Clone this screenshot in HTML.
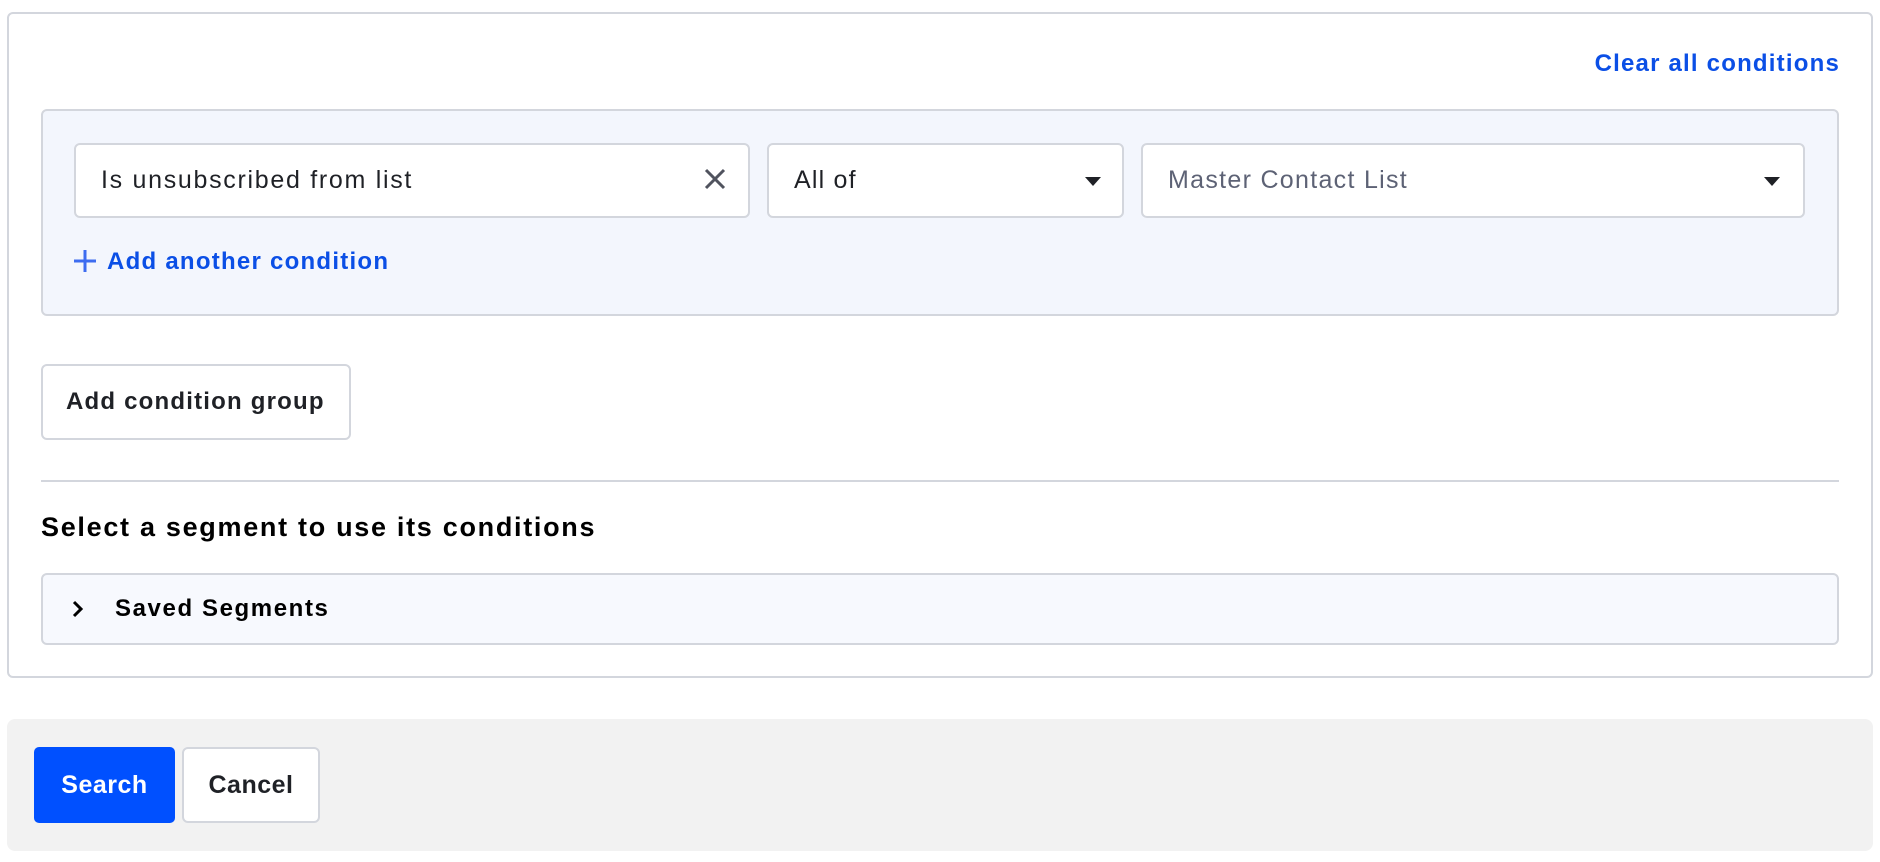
<!DOCTYPE html>
<html><head><style>
*{box-sizing:border-box;margin:0;padding:0}
body{width:1880px;height:862px;background:#fff;font-family:"Liberation Sans",sans-serif;position:relative;overflow:hidden;color:#1f2126}
.a{position:absolute}
.box{border:2px solid #d3d6dd;border-radius:6px}
.t{position:absolute;white-space:nowrap;line-height:1}
</style></head><body>
<div class="a box" style="left:7px;top:12px;width:1866px;height:666px;border-radius:6px"></div>
<div class="t" style="right:40px;top:52px;font-size:24px;font-weight:bold;color:#0b4fe6;letter-spacing:1.2px">Clear all conditions</div>
<div class="a box" style="left:41px;top:109px;width:1798px;height:207px;background:#f3f6fd"></div>
<div class="a box" style="left:74px;top:143px;width:676px;height:75px;background:#fff"></div>
<div class="t" style="left:101px;top:168px;font-size:25px;color:#1f2126;letter-spacing:1.7px">Is unsubscribed from list</div>
<svg class="a" style="left:704px;top:168px" width="22" height="22" viewBox="0 0 22 22"><path d="M2 2L20 20M20 2L2 20" stroke="#50535e" stroke-width="3"/></svg>
<div class="a box" style="left:767px;top:143px;width:357px;height:75px;background:#fff"></div>
<div class="t" style="left:794px;top:168px;font-size:25px;letter-spacing:1.2px">All of</div>
<svg class="a" style="left:1085px;top:177px" width="16" height="9"><path d="M0 0H16L8 9Z" fill="#1f2126"/></svg>
<div class="a box" style="left:1141px;top:143px;width:664px;height:75px;background:#fff"></div>
<div class="t" style="left:1168px;top:168px;font-size:25px;color:#5d6275;letter-spacing:1.3px">Master Contact List</div>
<svg class="a" style="left:1764px;top:177px" width="16" height="9"><path d="M0 0H16L8 9Z" fill="#1f2126"/></svg>
<svg class="a" style="left:74px;top:250px" width="22" height="22"><path d="M11 0V22M0 11H22" stroke="#3d6cf0" stroke-width="3"/></svg>
<div class="t" style="left:107px;top:250px;font-size:24px;font-weight:bold;color:#0b4fe6;letter-spacing:1.25px">Add another condition</div>
<div class="a box" style="left:41px;top:364px;width:310px;height:76px;background:#fff"></div>
<div class="t" style="left:66px;top:390px;font-size:24px;font-weight:bold;color:#1f2126;letter-spacing:1.2px">Add condition group</div>
<div class="a" style="left:41px;top:480px;width:1798px;height:2px;background:#d3d6dd"></div>
<div class="t" style="left:41px;top:514px;font-size:27px;font-weight:bold;color:#000;letter-spacing:1.7px">Select a segment to use its conditions</div>
<div class="a box" style="left:41px;top:573px;width:1798px;height:72px;background:#f7f9fe"></div>
<svg class="a" style="left:71px;top:600px" width="14" height="18"><path d="M3 2L10 9L3 16" stroke="#000" stroke-width="3" fill="none"/></svg>
<div class="t" style="left:115px;top:597px;font-size:24px;font-weight:bold;color:#000;letter-spacing:1.6px">Saved Segments</div>
<div class="a" style="left:7px;top:719px;width:1866px;height:132px;background:#f2f2f2;border-radius:8px"></div>
<div class="a" style="left:34px;top:747px;width:141px;height:76px;background:#0050ff;border-radius:5px"></div>
<div class="t" style="left:34px;top:773px;width:141px;text-align:center;font-size:25px;font-weight:bold;color:#fff;letter-spacing:0.5px">Search</div>
<div class="a box" style="left:182px;top:747px;width:138px;height:76px;background:#fff"></div>
<div class="t" style="left:182px;top:773px;width:138px;text-align:center;font-size:25px;font-weight:bold;color:#1f2126;letter-spacing:0.5px">Cancel</div>
</body></html>
